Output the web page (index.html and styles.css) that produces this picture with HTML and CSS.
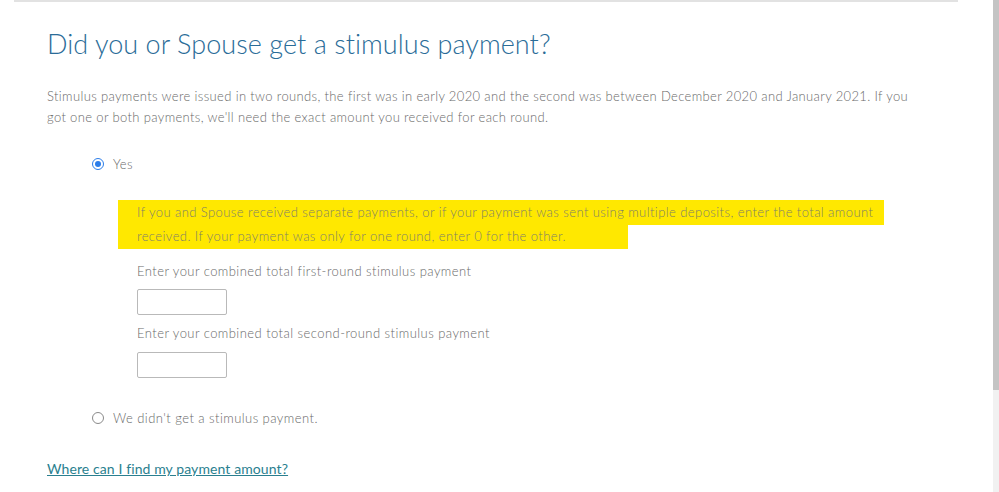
FILE: index.html
```html
<!DOCTYPE html>
<html lang="en">

<head>
  <meta charset="UTF-8" />
  <meta name="viewport" content="width=device-width, initial-scale=1.0" />
  <title>Stimulus payment</title>
  <link rel="stylesheet" href="styles.css">
</head>

<body>
  <div class="page">
    <div class="screen">
      <h1 class="title">Did you or Spouse get a stimulus payment?</h1>
      <p class="intro">
        Stimulus payments were issued in two rounds, the first was in early 2020 and the second was between December 2020 and January 2021. If you
        got one or both payments, we'll need the exact amount you received for each round.
      </p>

      <form class="choices">
        <label class="choice">
          <input type="radio" name="stimulus" value="yes" class="radio-input" checked>
          <span>Yes</span>
        </label>

        <div class="details">
          <div class="note">
            <span class="note-line">If you and Spouse received separate payments, or if your payment was sent using multiple deposits, enter the total amount</span>
            <span class="note-line note-line--last">received. If your payment was only for one round, enter 0 for the other.</span>
          </div>

          <label class="field-label" for="round1">Enter your combined total first-round stimulus payment</label>
          <input type="text" id="round1" class="amount">

          <label class="field-label field-label--second" for="round2">Enter your combined total second-round stimulus payment</label>
          <input type="text" id="round2" class="amount amount--second">
        </div>

        <label class="choice choice--no">
          <input type="radio" name="stimulus" value="no" class="radio-input">
          <span>We didn't get a stimulus payment.</span>
        </label>
      </form>

      <a href="#" class="help-link">Where can I find my payment amount?</a>
    </div>
  </div>

  <!-- полоса прокрутки справа -->
  <div class="scrollbar">
    <div class="scrollbar-thumb"></div>
  </div>
</body>

</html>
```

FILE: styles.css
```css
body {
  margin: 0;
  padding: 0;
  background-color: white;
  font-family: Lato, "Open Sans", sans-serif;
  font-weight: 300;
  color: #6a6a6a;
  display: flex;
  height: 492px;
  overflow: hidden;
}

.page {
  flex: 1;
}

.screen {
  margin-left: 14px;
  width: 944px;
  border-top: 2px solid #e2e2e2;
  padding-left: 33px;
  box-sizing: border-box;
}

.title {
  margin: 26px 0 0;
  font-size: 27px;
  line-height: 32px;
  font-weight: 300;
  color: #2a6c98;
  letter-spacing: 0.05px;
}

.intro {
  margin: 26px 0 0;
  font-size: 13px;
  line-height: 21px;
  letter-spacing: 0.36px;
  width: 880px;
}

.choices {
  margin: 0;
}

.choice {
  display: flex;
  align-items: center;
  height: 20px;
  margin: 26px 0 0 45px;
  font-size: 13px;
  letter-spacing: 0.45px;
  cursor: pointer;
}

.choice--no {
  margin-top: 30px;
}

/* круглый переключатель */
.radio-input {
  appearance: none;
  width: 12px;
  height: 12px;
  margin: 0 9px 0 0;
  border: 1px solid #8a8a8a;
  border-radius: 50%;
  box-sizing: border-box;
  position: relative;
}

.radio-input:checked {
  border: 1.5px solid #2b7de9;
}

.radio-input:checked::after {
  content: '';
  position: absolute;
  left: 1.5px;
  top: 1.5px;
  width: 6px;
  height: 6px;
  border-radius: 50%;
  background-color: #2b7de9;
}

.details {
  margin: 26px 0 0 90px;
  display: flex;
  flex-direction: column;
  align-items: flex-start;
}

/* маркер поверх подсказки */
.note {
  margin-left: -19px;
  font-size: 13px;
  letter-spacing: 0.43px;
}

.note-line {
  display: block;
  width: fit-content;
  height: 25px;
  line-height: 25px;
  padding: 0 11px 0 19px;
  background-color: #ffe800;
  color: #80806a;
}

.note-line--last {
  height: 24px;
  line-height: 23px;
  padding-right: 62px;
}

.field-label {
  margin-top: 12px;
  font-size: 13px;
  line-height: 20px;
  letter-spacing: 0.45px;
}

.amount {
  margin-top: 8px;
  width: 90px;
  height: 26px;
  box-sizing: border-box;
  border: 1px solid #b9b9b9;
  border-radius: 2px;
  font-family: inherit;
}

.field-label--second {
  margin-top: 8px;
}

.amount--second {
  margin-top: 9px;
}

.help-link {
  display: inline-block;
  margin-top: 31px;
  font-size: 14px;
  line-height: 20px;
  font-weight: 400;
  letter-spacing: 0.1px;
  color: #2a7f8f;
  text-decoration: underline;
}

.scrollbar {
  width: 6px;
  height: 492px;
  background-color: #f1f1f1;
}

.scrollbar-thumb {
  height: 390px;
  background-color: #c4c4c4;
}
```
